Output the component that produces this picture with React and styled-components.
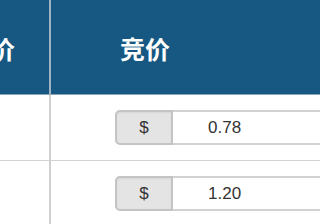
import React from "react";
import styled, { createGlobalStyle } from "styled-components";

const Global = createGlobalStyle`
  html, body {
    margin: 0;
    padding: 0;
    background: #ffffff;
    overflow: hidden;
  }
  body {
    font-family: "Liberation Sans", "Noto Sans CJK SC", sans-serif;
  }
`;

const Table = styled.div`
  width: 320px;
  height: 224px;
  overflow: hidden;
  display: grid;
  grid-template-columns: 51px 1fr;
  grid-template-rows: 95px 66px 66px;
`;

const HeadCell = styled.div`
  background: #175882;
  color: #ffffff;
  font-family: "Noto Sans CJK SC", sans-serif;
  font-weight: 700;
  font-size: 25px;
  display: flex;
  align-items: center;
  overflow: hidden;
  white-space: nowrap;
  border-bottom: 1px solid #8aa3b6;
  justify-content: ${(p) => (p.$first ? "flex-end" : "flex-start")};
  padding-right: ${(p) => (p.$first ? "34px" : "0")};
  padding-left: ${(p) => (p.$first ? "0" : "69px")};
  padding-top: 2px;
  border-right: ${(p) => (p.$first ? "2px solid #9fb3c2" : "none")};
`;

const Cell = styled.div`
  display: flex;
  align-items: center;
  border-bottom: 1px solid #d2d2d2;
  padding-left: ${(p) => (p.$first ? "0" : "64px")};
  border-right: ${(p) => (p.$first ? "2px solid #d0d0d0" : "none")};
  overflow: hidden;
`;

const InputGroup = styled.div`
  display: flex;
  height: 35px;
  flex: 1;
  margin-right: -20px;
`;

const Addon = styled.div`
  width: 58px;
  background: #e4e4e4;
  border: 2px solid #c4c4c4;
  border-radius: 5px 0 0 5px;
  display: flex;
  align-items: center;
  justify-content: center;
  color: #333333;
  font-size: 17px;
  box-sizing: border-box;
  box-shadow: inset 0 1px 2px rgba(0, 0, 0, 0.06);
`;

const Field = styled.div`
  flex: 1;
  border: 2px solid #d2d2d2;
  border-left: none;
  background: #ffffff;
  display: flex;
  align-items: center;
  padding-left: 35px;
  color: #333333;
  font-size: 17px;
  box-sizing: border-box;
`;

const rows = ["0.78", "1.20"];

const App = () => {
  return (
    <>
      <Global />
      <Table>
        <HeadCell $first>底价</HeadCell>
        <HeadCell>竞价</HeadCell>
        {rows.map((v) => (
          <React.Fragment key={v}>
            <Cell $first />
            <Cell>
              <InputGroup>
                <Addon>$</Addon>
                <Field>{v}</Field>
              </InputGroup>
            </Cell>
          </React.Fragment>
        ))}
      </Table>
    </>
  );
};

export default App;
